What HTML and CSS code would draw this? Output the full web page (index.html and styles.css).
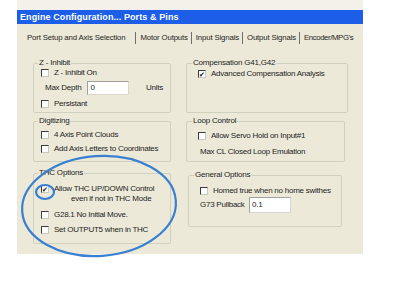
FILE: index.html
```html
<!DOCTYPE html>
<html lang="en">
<head>
  <meta charset="UTF-8">
  <title>Engine Configuration</title>
  <link rel="stylesheet" href="styles.css">
</head>
<body>
  <div class="window">
    <div class="top-strip"></div>
    <div class="titlebar">Engine Configuration... Ports &amp; Pins</div>

    <!-- Tabs -->
    <div class="tabs">
      <span class="tab tab-first">Port Setup and Axis Selection</span>
      <span class="tab">Motor Outputs</span>
      <span class="tab">Input Signals</span>
      <span class="tab">Output Signals</span>
      <span class="tab tab-last">Encoder/MPG's</span>
    </div>

    <div class="content">
      <!-- Left column -->
      <div class="col col-left">
        <fieldset class="group g-zinhibit">
          <legend>Z - Inhibit</legend>
          <div class="row r1"><span class="cb"></span>Z - Inhibit On</div>
          <div class="row r-depth">
            <span class="lbl-depth">Max Depth</span>
            <span class="field field-depth">0</span>
            <span class="units">Units</span>
          </div>
          <div class="row r3"><span class="cb"></span>Persistant</div>
        </fieldset>

        <fieldset class="group g-digit">
          <legend>Digitizing</legend>
          <div class="row"><span class="cb"></span>4 Axis Point Clouds</div>
          <div class="row"><span class="cb"></span>Add Axis Letters to Coordinates</div>
        </fieldset>

        <fieldset class="group g-thc">
          <legend>THC Options</legend>
          <div class="row r-allow"><span class="cb checked">&#10004;</span>Allow THC UP/DOWN Control</div>
          <div class="row r-even">even if not in THC Mode</div>
          <div class="row r-g28"><span class="cb"></span>G28.1 No Initial Move.</div>
          <div class="row r-out5"><span class="cb"></span>Set OUTPUT5 when in THC</div>
        </fieldset>
      </div>

      <!-- Right column -->
      <div class="col col-right">
        <fieldset class="group g-comp">
          <legend>Compensation G41,G42</legend>
          <div class="row"><span class="cb checked">&#10004;</span>Advanced Compensation Analysis</div>
        </fieldset>

        <fieldset class="group g-loop">
          <legend>Loop Control</legend>
          <div class="row r-servo"><span class="cb"></span>Allow Servo Hold on Input#1</div>
          <div class="row r-maxcl">Max CL Closed Loop Emulation</div>
        </fieldset>

        <fieldset class="group g-general">
          <legend>General Options</legend>
          <div class="row r-homed"><span class="cb"></span>Homed true when no home swithes</div>
          <div class="row r-g73">
            <span class="lbl-g73">G73 Pullback</span>
            <span class="field field-g73">0.1</span>
          </div>
        </fieldset>
      </div>
    </div>
  </div>

  <!-- hand drawn marker -->
  <svg class="marker" width="400" height="283" viewBox="0 0 400 283">
    <ellipse cx="99" cy="206" rx="77" ry="50" transform="rotate(-4 99 206)" />
    <ellipse cx="45" cy="192" rx="9" ry="7" />
  </svg>
</body>
</html>
```

FILE: styles.css
```css
* {
  box-sizing: border-box;
}

body {
  margin: 0;
  width: 400px;
  height: 283px;
  background: #fff;
  font-family: "Liberation Sans", Arial, sans-serif;
  font-size: 8px;
  color: #1e1e1e;
  position: relative;
  overflow: hidden;
}

.window {
  margin-left: 17px;
  width: 346px;
  height: 254px;
  background: #ece9d8;
  overflow: hidden;
}

.top-strip {
  height: 10px;
  background: #f3f1ea;
}

.titlebar {
  height: 14px;
  line-height: 14px;
  padding-left: 3px;
  background: #1c5ee8;
  color: #fff;
  font-weight: bold;
  font-size: 9px;
  letter-spacing: 0.1px;
}

.tabs {
  display: flex;
  align-items: center;
  height: 22px;
  padding-top: 5px;
  padding-left: 10px;
  white-space: nowrap;
  font-size: 7.8px;
}

.tab {
  flex: none;
  padding: 1px 3px 1px 4px;
  line-height: 10px;
  border-right: 1px solid #6f6f6f;
  letter-spacing: -0.15px;
}

.tab-first {
  padding-left: 0;
  padding-right: 10px;
}

.tab-last {
  border-right: none;
  letter-spacing: -0.4px;
}

.content {
  display: flex;
  padding: 12px 0 0 16px;
  gap: 15px;
}

.col {
  display: flex;
  flex-direction: column;
}

.col-left {
  width: 138px;
}

.col-right {
  width: 162px;
}

.group {
  margin: 0;
  border: 1px solid #d0d0bf;
  border-radius: 2px;
  padding: 0 7px;
  min-width: 0;
}

.group legend {
  padding: 0 1px;
  margin-left: -3px;
  line-height: 10px;
  height: 10px;
  letter-spacing: -0.2px;
}

.row {
  display: flex;
  align-items: center;
  height: 10px;
  line-height: 10px;
  white-space: nowrap;
  letter-spacing: -0.25px;
}

.cb {
  flex: none;
  width: 8px;
  height: 8px;
  margin-right: 5px;
  background: #fff;
  border: 1px solid #3c3c3c;
  border-right-color: #c8c8c0;
  border-bottom-color: #c8c8c0;
  font-size: 7px;
  line-height: 7px;
  text-align: center;
  color: #111;
}

/* Z - Inhibit */
.g-zinhibit {
  padding-bottom: 3px;
}

.r-depth {
  height: 14px;
  margin-top: 3px;
  padding-left: 4px;
}

.r3 {
  margin-top: 4px;
}

.lbl-depth {
  width: 44px;
}

.field {
  display: block;
  height: 14px;
  line-height: 12px;
  padding-left: 2px;
  background: #fff;
  border: 1px solid #d8d8d0;
  border-top-color: #a0a0a0;
  border-left-color: #a0a0a0;
}

.field-depth {
  width: 43px;
}

.units {
  margin-left: 17px;
}

/* Digitizing */
.g-digit {
  margin-top: 3px;
  padding-bottom: 7px;
}

.g-digit .row {
  margin-top: 4px;
}

/* THC Options */
.g-thc {
  margin-top: 6px;
  padding-bottom: 8px;
}

.r-allow {
  margin-top: 6px;
}

.r-even {
  padding-left: 30px;
}

.r-g28 {
  margin-top: 6px;
}

.r-out5 {
  margin-top: 5px;
}

/* Right column groups */
.col-right .group {
  padding-left: 11px;
}

.col-right .group legend {
  margin-left: -6px;
}

.g-comp {
  padding-bottom: 33px;
}

.g-comp .row {
  margin-top: 1px;
}

.g-loop {
  margin-top: 3px;
  width: 159px;
  padding-bottom: 4px;
}

.r-servo {
  margin-top: 5px;
}

.r-maxcl {
  margin-top: 6px;
  padding-left: 2px;
}

.g-general {
  margin-top: 8px;
  margin-left: 2px;
  width: 154px;
  padding-bottom: 13px;
}

.col-right .g-general {
  padding-left: 11px;
}

.r-homed {
  margin-top: 6px;
}

.r-g73 {
  height: 16px;
  margin-top: 1px;
}

.lbl-g73 {
  width: 49px;
}

.field-g73 {
  width: 42px;
  height: 16px;
  line-height: 14px;
}

.marker {
  position: absolute;
  left: 0;
  top: 0;
  fill: none;
  stroke: #3a80d2;
  stroke-width: 2.2;
}
```
